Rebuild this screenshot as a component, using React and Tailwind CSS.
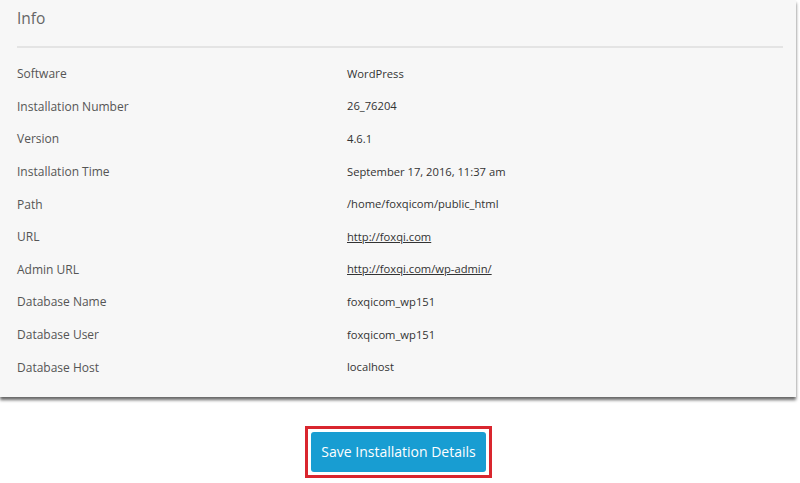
import React from "react";

const rows = [
  { label: "Software", value: "WordPress" },
  { label: "Installation Number", value: "26_76204" },
  { label: "Version", value: "4.6.1" },
  { label: "Installation Time", value: "September 17, 2016, 11:37 am" },
  { label: "Path", value: "/home/foxqicom/public_html" },
  { label: "URL", value: "http://foxqi.com", link: true },
  { label: "Admin URL", value: "http://foxqi.com/wp-admin/", link: true },
  { label: "Database Name", value: "foxqicom_wp151" },
  { label: "Database User", value: "foxqicom_wp151" },
  { label: "Database Host", value: "localhost" },
];

export default function App() {
  return (
    <div
      className="w-[800px] h-[483px] bg-white overflow-hidden"
      style={{ fontFamily: '"Open Sans", "Liberation Sans", sans-serif' }}
    >
      <section className="w-[796px] bg-[#f7f7f7] px-[17px] pt-[7px] pb-[13px] shadow-[0_3px_3px_rgba(0,0,0,0.6)]">
        <h2 className="text-[15.5px] leading-[22px] text-[#666]">Info</h2>
        <div className="mt-[17px] w-[766px] h-[2px] bg-[#e4e4e4]"></div>
        <div className="mt-[10px]">
          {rows.map((row, index) => (
            <div key={index} className="flex items-center h-[32.6px]">
              <p className="w-[330px] text-[12px] text-[#555]">{row.label}</p>
              {row.link ? (
                <a href="#" className="text-[11.2px] text-[#333] underline">
                  {row.value}
                </a>
              ) : (
                <p className="text-[11.2px] text-[#333]">{row.value}</p>
              )}
            </div>
          ))}
        </div>
      </section>
      <div className="flex justify-center mt-[29px] pr-[3px]">
        <div className="border-[3px] border-[#d9262e] p-[3px]">
          <button className="w-[175px] h-[40px] rounded-[3px] bg-[#189dd2] text-white text-[14px]">
            Save Installation Details
          </button>
        </div>
      </div>
    </div>
  );
}
